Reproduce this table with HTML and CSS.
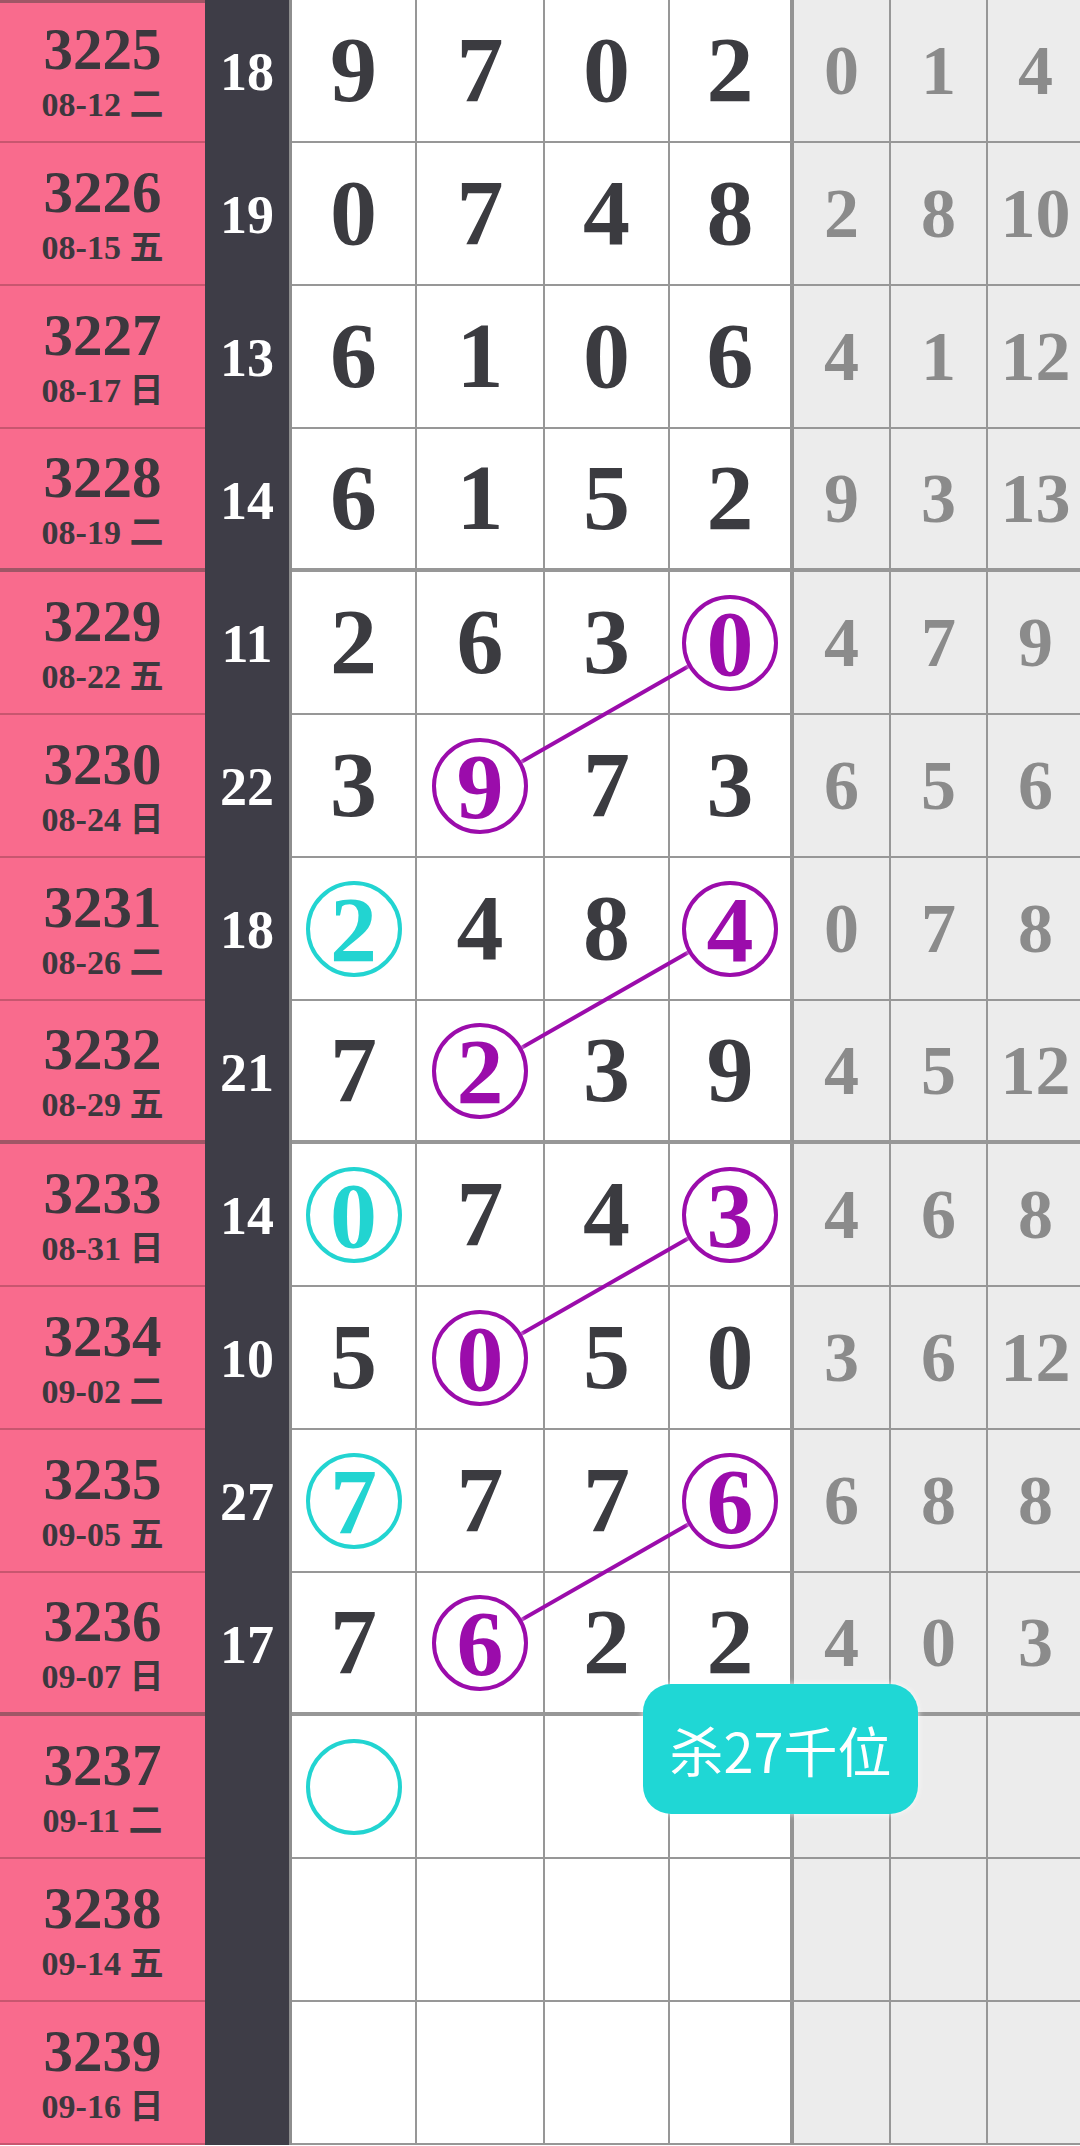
FILE: index.html
```html
<!DOCTYPE html>
<html lang="zh-CN">
<head>
    <meta charset="UTF-8">
    <meta name="viewport" content="width=device-width, initial-scale=1.0">
    <title>走势图</title>
    <link rel="stylesheet" href="styles.css">
</head>
<body>
    <div class="chart">
        <div class="row">
            <div class="cell issue"><span class="no">3225</span><span class="date">08-12 二</span></div>
            <div class="cell sum">18</div>
            <div class="cell num">9</div><div class="cell num">7</div><div class="cell num">0</div><div class="cell num">2</div>
            <div class="cell miss">0</div><div class="cell miss">1</div><div class="cell miss">4</div>
        </div>
        <div class="row">
            <div class="cell issue"><span class="no">3226</span><span class="date">08-15 五</span></div>
            <div class="cell sum">19</div>
            <div class="cell num">0</div><div class="cell num">7</div><div class="cell num">4</div><div class="cell num">8</div>
            <div class="cell miss">2</div><div class="cell miss">8</div><div class="cell miss">10</div>
        </div>
        <div class="row">
            <div class="cell issue"><span class="no">3227</span><span class="date">08-17 日</span></div>
            <div class="cell sum">13</div>
            <div class="cell num">6</div><div class="cell num">1</div><div class="cell num">0</div><div class="cell num">6</div>
            <div class="cell miss">4</div><div class="cell miss">1</div><div class="cell miss">12</div>
        </div>
        <div class="row end">
            <div class="cell issue"><span class="no">3228</span><span class="date">08-19 二</span></div>
            <div class="cell sum">14</div>
            <div class="cell num">6</div><div class="cell num">1</div><div class="cell num">5</div><div class="cell num">2</div>
            <div class="cell miss">9</div><div class="cell miss">3</div><div class="cell miss">13</div>
        </div>

        <div class="row">
            <div class="cell issue"><span class="no">3229</span><span class="date">08-22 五</span></div>
            <div class="cell sum">11</div>
            <div class="cell num">2</div><div class="cell num">6</div><div class="cell num">3</div>
            <div class="cell num"><span class="ball purple">0</span></div>
            <div class="cell miss">4</div><div class="cell miss">7</div><div class="cell miss">9</div>
        </div>
        <div class="row">
            <div class="cell issue"><span class="no">3230</span><span class="date">08-24 日</span></div>
            <div class="cell sum">22</div>
            <div class="cell num">3</div>
            <div class="cell num"><span class="ball purple">9</span></div>
            <div class="cell num">7</div><div class="cell num">3</div>
            <div class="cell miss">6</div><div class="cell miss">5</div><div class="cell miss">6</div>
        </div>
        <div class="row">
            <div class="cell issue"><span class="no">3231</span><span class="date">08-26 二</span></div>
            <div class="cell sum">18</div>
            <div class="cell num"><span class="ball cyan">2</span></div>
            <div class="cell num">4</div><div class="cell num">8</div>
            <div class="cell num"><span class="ball purple">4</span></div>
            <div class="cell miss">0</div><div class="cell miss">7</div><div class="cell miss">8</div>
        </div>
        <div class="row end">
            <div class="cell issue"><span class="no">3232</span><span class="date">08-29 五</span></div>
            <div class="cell sum">21</div>
            <div class="cell num">7</div>
            <div class="cell num"><span class="ball purple">2</span></div>
            <div class="cell num">3</div><div class="cell num">9</div>
            <div class="cell miss">4</div><div class="cell miss">5</div><div class="cell miss">12</div>
        </div>

        <div class="row">
            <div class="cell issue"><span class="no">3233</span><span class="date">08-31 日</span></div>
            <div class="cell sum">14</div>
            <div class="cell num"><span class="ball cyan">0</span></div>
            <div class="cell num">7</div><div class="cell num">4</div>
            <div class="cell num"><span class="ball purple">3</span></div>
            <div class="cell miss">4</div><div class="cell miss">6</div><div class="cell miss">8</div>
        </div>
        <div class="row">
            <div class="cell issue"><span class="no">3234</span><span class="date">09-02 二</span></div>
            <div class="cell sum">10</div>
            <div class="cell num">5</div>
            <div class="cell num"><span class="ball purple">0</span></div>
            <div class="cell num">5</div><div class="cell num">0</div>
            <div class="cell miss">3</div><div class="cell miss">6</div><div class="cell miss">12</div>
        </div>
        <div class="row">
            <div class="cell issue"><span class="no">3235</span><span class="date">09-05 五</span></div>
            <div class="cell sum">27</div>
            <div class="cell num"><span class="ball cyan">7</span></div>
            <div class="cell num">7</div><div class="cell num">7</div>
            <div class="cell num"><span class="ball purple">6</span></div>
            <div class="cell miss">6</div><div class="cell miss">8</div><div class="cell miss">8</div>
        </div>
        <div class="row end">
            <div class="cell issue"><span class="no">3236</span><span class="date">09-07 日</span></div>
            <div class="cell sum">17</div>
            <div class="cell num">7</div>
            <div class="cell num"><span class="ball purple">6</span></div>
            <div class="cell num">2</div><div class="cell num">2</div>
            <div class="cell miss">4</div><div class="cell miss">0</div><div class="cell miss">3</div>
        </div>

        <div class="row">
            <div class="cell issue"><span class="no">3237</span><span class="date">09-11 二</span></div>
            <div class="cell sum"></div>
            <div class="cell num"><span class="ball cyan"></span></div>
            <div class="cell num"></div><div class="cell num"></div><div class="cell num"></div>
            <div class="cell miss"></div><div class="cell miss"></div><div class="cell miss"></div>
        </div>
        <div class="row">
            <div class="cell issue"><span class="no">3238</span><span class="date">09-14 五</span></div>
            <div class="cell sum"></div>
            <div class="cell num"></div><div class="cell num"></div><div class="cell num"></div><div class="cell num"></div>
            <div class="cell miss"></div><div class="cell miss"></div><div class="cell miss"></div>
        </div>
        <div class="row">
            <div class="cell issue"><span class="no">3239</span><span class="date">09-16 日</span></div>
            <div class="cell sum"></div>
            <div class="cell num"></div><div class="cell num"></div><div class="cell num"></div><div class="cell num"></div>
            <div class="cell miss"></div><div class="cell miss"></div><div class="cell miss"></div>
        </div>

        <!-- 连线 -->
        <svg class="links" width="1080" height="2146" viewBox="0 0 1080 2146">
            <line x1="730" y1="642.5" x2="480" y2="785.5"/>
            <line x1="730" y1="928.5" x2="480" y2="1071.5"/>
            <line x1="730" y1="1214.5" x2="480" y2="1357.5"/>
            <line x1="730" y1="1500.5" x2="480" y2="1643.5"/>
        </svg>

        <div class="tip">杀27千位</div>
    </div>
</body>
</html>
```

FILE: styles.css
```css
body {
    margin: 0;
    width: 1080px;
    height: 2146px;
    overflow: hidden;
    background: #fff;
    font-family: "Liberation Serif", "Noto Sans CJK SC", serif;
    font-weight: bold;
    color: #3b3b40;
}
.chart {
    position: relative;
    width: 1080px;
}
.row {
    display: grid;
    grid-template-columns: 205px 87px 125px 128px 125px 124px 97px 97px 97px;
    height: 143px;
}
.cell {
    display: flex;
    align-items: center;
    justify-content: center;
    box-sizing: border-box;
    border-bottom: 2px solid #979797;
}
.row.end .cell {
    border-bottom-width: 4px;
}
.issue {
    flex-direction: column;
    background: #f96b8d;
    color: #3c383e;
    border-bottom-color: #c8566f;
}
.row.end .issue {
    border-bottom-color: #a05666;
}
.row:first-child .issue {
    box-shadow: inset 0 3px 0 #a05666;
}
.no {
    font-size: 59px;
    line-height: 1;
}
.date {
    font-size: 34px;
    line-height: 1;
    margin-top: 9px;
}
.sum {
    background: #3e3d47;
    color: #fff;
    font-size: 54px;
    border-bottom: none;
    border-right: 3px solid #8e8e8e;
}
.row.end .sum {
    border-bottom: none;
}
.num {
    font-size: 94px;
    line-height: 1;
    border-right: 2px solid #979797;
    padding-bottom: 4px;
}
.num:nth-child(6) {
    border-right: 4px solid #949494;
}
.miss {
    background: #ececec;
    color: #8b8b8b;
    font-size: 70px;
    line-height: 1;
    border-right: 2px solid #979797;
}
.ball {
    position: relative;
    z-index: 2;
    display: flex;
    align-items: center;
    justify-content: center;
    width: 96px;
    height: 96px;
    box-sizing: border-box;
    border: 4px solid;
    border-radius: 50%;
    background: #fff;
    margin-top: 4px;
    box-shadow: 0 0 4px rgba(255, 255, 255, 0.9);
}
.ball.purple {
    color: #9b0cab;
    border-color: #9b0cab;
}
.ball.cyan {
    color: #22d4d1;
    border-color: #22d4d1;
}
.links {
    position: absolute;
    top: 0;
    left: 0;
    z-index: 1;
    pointer-events: none;
}
.links line {
    stroke: #9b0cab;
    stroke-width: 4;
}
.tip {
    position: absolute;
    left: 643px;
    top: 1684px;
    z-index: 3;
    width: 275px;
    height: 130px;
    display: flex;
    align-items: center;
    justify-content: center;
    border-radius: 28px;
    background: #1fd7d5;
    color: #fff;
    font-family: "Noto Sans CJK SC", sans-serif;
    font-weight: normal;
    font-size: 54px;
    box-shadow: 0 0 6px rgba(255, 255, 255, 0.8);
}
```
